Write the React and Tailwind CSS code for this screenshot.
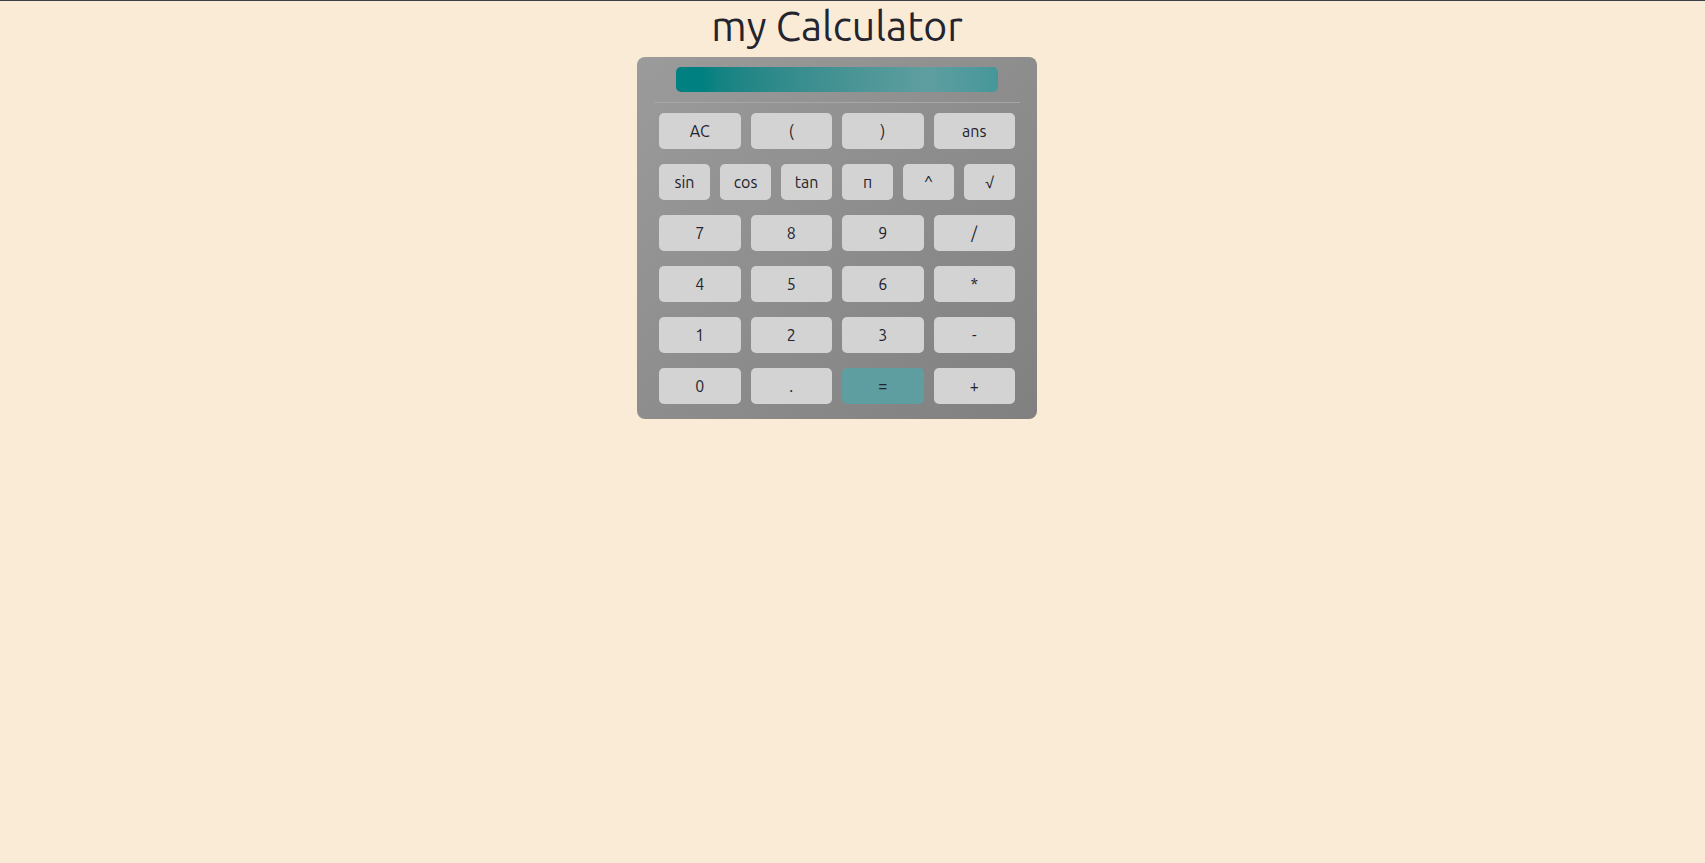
import React from "react";

const rows = [
  ["AC", "(", ")", "ans"],
  ["sin", "cos", "tan", "π", "^", "√"],
  ["7", "8", "9", "/"],
  ["4", "5", "6", "*"],
  ["1", "2", "3", "-"],
  ["0", ".", "=", "+"],
];

export default function App() {
  return (
    <div
      className="min-h-screen bg-[#faebd7] border-t border-[#3d3e4b] text-[#24242e]"
      style={{ fontFamily: "Ubuntu, 'Open Sans', sans-serif" }}
    >
      <div className="flex flex-col items-center pr-[31px]">
        <h1 className="text-[41px] leading-[48px] font-normal mt-[1px] mb-[7px]">my Calculator</h1>

        <div className="w-[400px] rounded-lg bg-gradient-to-br from-[#9b9b9b] to-[#808080] px-[22px] pt-[10px] pb-[15px]">
          <div className="w-[322px] h-[25px] mx-auto rounded-[5px] bg-gradient-to-r from-[#008080] from-8% via-[#5f9ea0] via-78% to-[#45979a]" />
          <div className="mt-[10px] -mx-[5px] h-px bg-[#a6a6a6]" />

          <div className="mt-[10px] flex flex-col gap-[15px]">
            {rows.map((row, i) => (
              <div key={i} className="flex gap-[10px]">
                {row.map((k) => (
                  <button
                    key={k}
                    className={`flex-1 h-[36px] rounded-[5px] text-[16px] flex items-center justify-center ${
                      k === "=" ? "bg-[#5f9ea0]" : "bg-[#d3d3d3]"
                    }`}
                  >
                    {k}
                  </button>
                ))}
              </div>
            ))}
          </div>
        </div>
      </div>
    </div>
  );
}
